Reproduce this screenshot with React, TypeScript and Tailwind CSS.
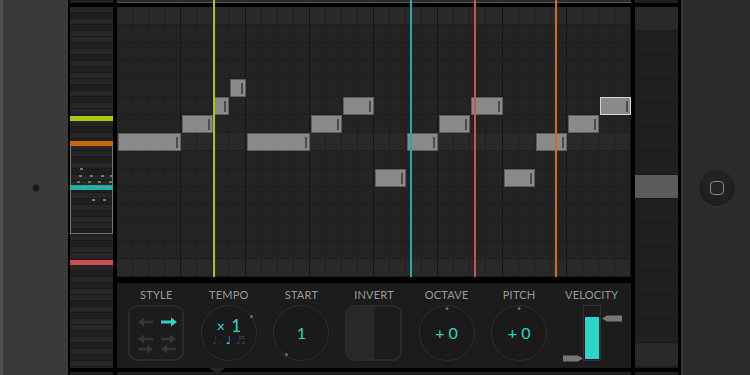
import React from "react";

const STEP = 514 / 32;
const ROW = 18;

type Note = { s: number; len: number; row: number; sel?: boolean };

const notes: Note[] = [
  { s: 0, len: 4, row: 7 },
  { s: 4, len: 2, row: 6 },
  { s: 6, len: 1, row: 5 },
  { s: 7, len: 1, row: 4 },
  { s: 8, len: 4, row: 7 },
  { s: 12, len: 2, row: 6 },
  { s: 14, len: 2, row: 5 },
  { s: 16, len: 2, row: 9 },
  { s: 18, len: 2, row: 7 },
  { s: 20, len: 2, row: 6 },
  { s: 22, len: 2, row: 5 },
  { s: 24, len: 2, row: 9 },
  { s: 26, len: 2, row: 7 },
  { s: 28, len: 2, row: 6 },
  { s: 30, len: 2, row: 5, sel: true },
];

const playheads = [
  { x: 96, color: "bg-[#a8c814]" },
  { x: 293, color: "bg-[#22aba5]" },
  { x: 357, color: "bg-[#cc5150]" },
  { x: 438, color: "bg-[#d2700e]" },
];

// piano-ish shading for the mini keyboard strip
const keyPattern = [0, 1, 0, 1, 0, 0, 1, 0, 1, 0, 1, 0];

const miniDots = [
  { x: 10, y: 161 },
  { x: 9, y: 168 },
  { x: 20, y: 168 },
  { x: 31, y: 168 },
  { x: 40, y: 168 },
  { x: 7, y: 174 },
  { x: 18, y: 174 },
  { x: 28, y: 174 },
  { x: 39, y: 174 },
  { x: 22, y: 192 },
  { x: 33, y: 192 },
];

function Grid() {
  return (
    <div className="relative h-[270px] w-[514px] overflow-hidden">
      <div className="flex h-full flex-col">
        {Array.from({ length: 15 }).map((_, i) => (
          <div
            key={i}
            className={`h-[18px] border-b border-[#1e1e1e] ${
              i % 7 === 0 ? "bg-[#292929]" : "bg-[#232323]"
            }`}
          />
        ))}
      </div>
      <div className="absolute inset-0 flex">
        {Array.from({ length: 32 }).map((_, i) => (
          <div
            key={i}
            className={`flex-1 border-r ${
              i % 4 === 3 ? "border-[#161616]" : "border-[#1f1f1f]"
            }`}
          />
        ))}
      </div>
      {notes.map((n, i) => (
        <div
          key={i}
          className={`absolute border bg-[#8a8a8a] ${
            n.sel ? "border-[#d6d6d6]" : "border-[#5e5e5e]"
          }`}
          style={{
            left: n.s * STEP + 1,
            width: n.len * STEP - 1,
            top: n.row * ROW,
            height: ROW,
          }}
        >
          <div className="absolute bottom-[2px] right-[2px] top-[3px] w-[2px] bg-[#4b4b4b]" />
        </div>
      ))}
    </div>
  );
}

function Label({ children }: { children: React.ReactNode }) {
  return (
    <div className="h-[11px] text-[11px] leading-[11px] tracking-[0.02em] text-[#9a9a9a]">
      {children}
    </div>
  );
}

function Knob({
  children,
  dot,
}: {
  children: React.ReactNode;
  dot: string;
}) {
  return (
    <div className="relative flex h-[56px] w-[56px] items-center justify-center rounded-full border-[1.5px] border-[#2e2e2e] bg-[#1a1a1a]">
      {children}
      <div className={`absolute h-[3px] w-[3px] rounded-full bg-[#6a6a6a] ${dot}`} />
    </div>
  );
}

function Arrow({
  x1,
  x2,
  y,
  color,
  w = 2.5,
}: {
  x1: number;
  x2: number;
  y: number;
  color: string;
  w?: number;
}) {
  const dir = x2 > x1 ? 1 : -1;
  const head = 6 * dir;
  return (
    <g>
      <line x1={x1} y1={y} x2={x2 - head} y2={y} stroke={color} strokeWidth={w} />
      <polygon
        points={`${x2},${y} ${x2 - head},${y - 4.5} ${x2 - head},${y + 4.5}`}
        fill={color}
      />
    </g>
  );
}

function StyleBox() {
  const dim = "#363636";
  return (
    <div className="h-[56px] w-[56px] rounded-[9px] border-2 border-[#2a2a2a]">
      <svg width="52" height="52" viewBox="0 0 52 52">
        <Arrow x1={23} x2={8} y={15} color={dim} />
        <Arrow x1={31} x2={47} y={15} color="#2fd3c6" w={3} />
        <Arrow x1={23} x2={8} y={32} color={dim} />
        <Arrow x1={8} x2={23} y={42} color={dim} />
        <Arrow x1={31} x2={46} y={32} color={dim} />
        <Arrow x1={46} x2={31} y={42} color={dim} />
      </svg>
    </div>
  );
}

function Invert() {
  return (
    <div className="flex h-[56px] w-[57px] rounded-[9px] border-2 border-[#2a2a2a]">
      <div className="h-full w-[27px] rounded-l-[7px] bg-[#282828]" />
    </div>
  );
}

function Velocity() {
  return (
    <div className="relative flex h-[56px] w-[56px] justify-center">
      <div className="flex h-[56px] w-[18px] flex-col justify-end border-[1.5px] border-[#333] p-[1px]">
        <div className="h-[42px] w-full bg-[#2dd4c8]" />
      </div>
      <svg className="absolute left-[38px] top-[10px]" width="20" height="7" viewBox="0 0 20 7">
        <polygon points="0,3.5 5,0.5 20,0.5 20,6.5 5,6.5" fill="#777" />
      </svg>
      <svg className="absolute left-[-1px] top-[50px]" width="20" height="7" viewBox="0 0 20 7">
        <polygon points="20,3.5 15,0.5 0,0.5 0,6.5 15,6.5" fill="#777" />
      </svg>
    </div>
  );
}

function Panel() {
  return (
    <div className="relative grid h-[85px] grid-cols-7 bg-[#1c1c1c] px-[3px] pt-[6px] font-['Lato',sans-serif]">
      <div className="flex flex-col items-center gap-[5px]">
        <Label>STYLE</Label>
        <StyleBox />
      </div>
      <div className="flex flex-col items-center gap-[5px]">
        <Label>TEMPO</Label>
        <Knob dot="right-[3px] top-[9px]">
          <div className="flex -translate-y-[1px] flex-col items-center">
            <div className="flex items-baseline gap-[6px] text-[#2fd3c6]">
              <span className="text-[15px] leading-[13px]">×</span>
              <span className="text-[17px] leading-[15px]">1</span>
            </div>
            <div className="mt-[2px] flex items-end gap-[5px] font-['DejaVu_Sans',sans-serif] text-[11px] leading-[11px]">
              <span className="text-[#3c3c3c]">♩.</span>
              <span className="text-[#2fd3c6]">♩</span>
              <span className="text-[#3c3c3c]">♬</span>
            </div>
          </div>
        </Knob>
      </div>
      <div className="flex flex-col items-center gap-[5px]">
        <Label>START</Label>
        <Knob dot="left-[11px] bottom-[4px]">
          <span className="text-[16px] leading-none text-[#2fd3c6]">1</span>
        </Knob>
      </div>
      <div className="flex flex-col items-center gap-[5px]">
        <Label>INVERT</Label>
        <Invert />
      </div>
      <div className="flex flex-col items-center gap-[5px]">
        <Label>OCTAVE</Label>
        <Knob dot="left-1/2 top-[1px] -translate-x-1/2">
          <span className="text-[16px] leading-none text-[#2fd3c6]">+ 0</span>
        </Knob>
      </div>
      <div className="flex flex-col items-center gap-[5px]">
        <Label>PITCH</Label>
        <Knob dot="left-1/2 top-[1px] -translate-x-1/2">
          <span className="text-[16px] leading-none text-[#2fd3c6]">+ 0</span>
        </Knob>
      </div>
      <div className="flex flex-col items-center gap-[5px]">
        <Label>VELOCITY</Label>
        <Velocity />
      </div>
      <div className="absolute left-[92px] top-full h-0 w-0 border-x-[8px] border-t-[6px] border-x-transparent border-t-[#242424]" />
    </div>
  );
}

function MiniStrip() {
  return (
    <div className="relative h-[361px] w-[43px] overflow-hidden bg-[#232323]">
      <div className="flex flex-col">
        {Array.from({ length: 61 }).map((_, i) => (
          <div
            key={i}
            className={`h-[6px] border-b border-[#1a1a1a] ${
              keyPattern[i % 12] ? "bg-[#1f1f1f]" : "bg-[#262626]"
            }`}
          />
        ))}
      </div>
      <div className="absolute left-0 right-0 top-[109px] h-[5px] bg-[#a8c814]" />
      <div className="absolute left-0 right-0 top-[134px] h-[93px] border border-[#777]" />
      <div className="absolute left-0 right-0 top-[134px] h-[5px] bg-[#c86a0c]" />
      <div className="absolute left-0 right-0 top-[178px] h-[5px] bg-[#1fb0a6]" />
      {[3, 13, 26, 36].map((x) => (
        <div key={x} className="absolute top-[180px] h-[1px] w-[3px] bg-[#c97a7a]" style={{ left: x }} />
      ))}
      <div className="absolute left-0 right-0 top-[253px] h-[5px] bg-[#c95050]" />
      {miniDots.map((d, i) => (
        <div
          key={i}
          className="absolute h-[2px] w-[3px] bg-[#777]"
          style={{ left: d.x, top: d.y }}
        />
      ))}
    </div>
  );
}

function ZoomColumn() {
  return (
    <div className="flex h-[361px] w-[43px] flex-col bg-[#202020]">
      {Array.from({ length: 15 }).map((_, i) => (
        <div
          key={i}
          className={`h-[24px] border-b border-[#1a1a1a] ${
            i === 7 ? "bg-[#5b5b5b]" : i === 0 || i === 14 ? "bg-[#292929]" : "bg-[#202020]"
          }`}
        />
      ))}
    </div>
  );
}

export default function App() {
  return (
    <div className="flex h-[375px] w-[750px] overflow-hidden bg-black">
      {/* left bezel */}
      <div className="flex h-full w-[68px] items-center justify-center border-l-[3px] border-[#505050] bg-[#3a3a3a]">
        <div className="h-[8px] w-[8px] rounded-full border border-[#2c2c2c] bg-[#161616]" />
      </div>

      {/* mini keyboard strip */}
      <div className="ml-[2px] flex w-[43px] flex-col gap-[4px]">
        <div className="h-[3px] bg-[#1f1f1f]" />
        <MiniStrip />
        <div className="h-[3px] bg-[#1f1f1f]" />
      </div>

      {/* main editor */}
      <div className="relative ml-[4px] flex w-[514px] flex-col">
        <div className="h-[3px] border-b border-[#575757] bg-[#2a2a2a]" />
        <div className="mt-[4px]">
          <Grid />
        </div>
        <div className="mt-[6px]">
          <Panel />
        </div>
        <div className="mt-[4px] h-[3px] bg-[#1f1f1f]" />
        {playheads.map((p) => (
          <div
            key={p.x}
            className={`absolute top-0 h-[277px] w-[2px] ${p.color}`}
            style={{ left: p.x }}
          />
        ))}
      </div>

      {/* zoom column */}
      <div className="ml-[4px] flex w-[43px] flex-col gap-[4px]">
        <div className="h-[3px] bg-[#1f1f1f]" />
        <ZoomColumn />
        <div className="h-[3px] bg-[#1f1f1f]" />
      </div>

      {/* right bezel */}
      <div className="ml-[3px] flex h-full flex-1 items-center justify-center border-l-2 border-[#383838] bg-[#2b2b2b]">
        <div className="flex h-[36px] w-[36px] items-center justify-center rounded-full bg-[radial-gradient(circle_at_50%_40%,#262626,#1b1b1b)] shadow-[0_1px_0_#333]">
          <div className="h-[14px] w-[14px] rounded-[4px] border-[1.5px] border-[#8a8a8a]" />
        </div>
      </div>
    </div>
  );
}
